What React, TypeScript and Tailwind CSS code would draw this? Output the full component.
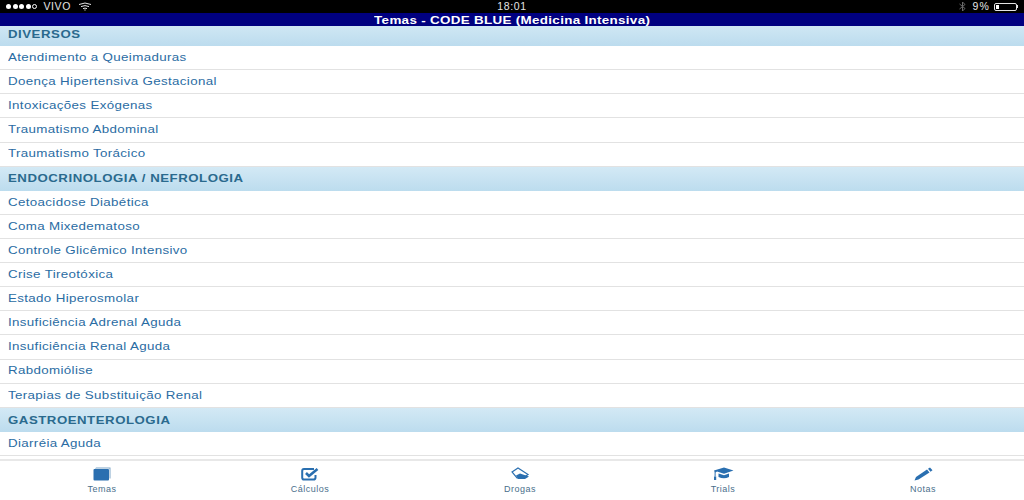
import React from 'react';

const sections = [
  {
    title: 'DIVERSOS',
    items: [
      'Atendimento a Queimaduras',
      'Doença Hipertensiva Gestacional',
      'Intoxicações Exógenas',
      'Traumatismo Abdominal',
      'Traumatismo Torácico',
    ],
  },
  {
    title: 'ENDOCRINOLOGIA / NEFROLOGIA',
    items: [
      'Cetoacidose Diabética',
      'Coma Mixedematoso',
      'Controle Glicêmico Intensivo',
      'Crise Tireotóxica',
      'Estado Hiperosmolar',
      'Insuficiência Adrenal Aguda',
      'Insuficiência Renal Aguda',
      'Rabdomiólise',
      'Terapias de Substituição Renal',
    ],
  },
  {
    title: 'GASTROENTEROLOGIA',
    // the next row is only a sliver above the tab bar, its text is not visible
    items: ['Diarréia Aguda', ''],
  },
];

const TemasIcon = () => (
  <svg width="18" height="14" viewBox="0 0 18 14" fill="#2a6fb0">
    <path d="M2 2 L3 0.5 H17.5 V11.5 H16.5 V1.5 H3.5 Z" fill="#7fa6c8" />
    <rect x="0.5" y="2" width="15.5" height="11.5" rx="1" />
  </svg>
);

const CalculosIcon = () => (
  <svg width="18" height="14" viewBox="0 0 18 14" fill="none" stroke="#2a6fb0">
    <path d="M13 2 H3 Q1.2 2 1.2 4 V10.5 Q1.2 12.6 3 12.6 H12.5 Q14.5 12.6 14.5 10.5 V8" strokeWidth="2" />
    <path d="M5 6 L8 9 L16.5 2" strokeWidth="2.6" />
  </svg>
);

const DrogasIcon = () => (
  <svg width="19" height="14" viewBox="0 0 19 14">
    <path d="M1 5 L7 1 L17 7.5 L12 11 H6 Z" fill="#ffffff" stroke="#2a6fb0" strokeWidth="1.2" />
    <path d="M5 8.5 L9 6.5 L18 9.5 L14 12 H7 Z" fill="#2a6fb0" />
  </svg>
);

const TrialsIcon = () => (
  <svg width="21" height="14" viewBox="0 0 21 14" fill="#2a6fb0">
    <path d="M11 0.5 L20.5 3.5 L11 6.8 L4 4.6 L2.6 5.4 V9.5 H1.6 V5 L1 3.6 Z" />
    <path d="M5.5 6.4 L11 8.2 L16 6.4 V10 Q11 12.5 5.5 10 Z" />
    <rect x="1" y="9.5" width="2.2" height="3.5" />
  </svg>
);

const NotasIcon = () => (
  <svg width="19" height="14" viewBox="0 0 19 14" fill="#2a6fb0">
    <path d="M0.5 13.5 L2 10 L13 2.5 L15.5 5.5 L4.5 12.5 Z" />
    <path d="M14 1.8 L16 0.5 L18.5 3.2 L16.5 4.8 Z" />
  </svg>
);

const tabs = [
  { label: 'Temas', icon: <TemasIcon />, cx: 'w-[204px]' },
  { label: 'Cálculos', icon: <CalculosIcon />, cx: 'w-[212px]' },
  { label: 'Drogas', icon: <DrogasIcon />, cx: 'w-[208px]' },
  { label: 'Trials', icon: <TrialsIcon />, cx: 'w-[198px]' },
  { label: 'Notas', icon: <NotasIcon />, cx: 'w-[202px]' },
];

export default function App() {
  return (
    <div className="w-[1024px] h-[500px] flex flex-col overflow-hidden bg-white font-['Liberation_Sans',sans-serif]">
      <div className="h-[13px] shrink-0 bg-black text-white text-[10.5px] leading-[13px] grid grid-cols-3 px-[6px]">
        <div className="flex items-center gap-[1.5px]">
          {[0, 1, 2, 3].map((i) => (
            <span key={i} className="w-[5px] h-[5px] rounded-full bg-white" />
          ))}
          <span className="w-[5px] h-[5px] rounded-full border border-white" />
          <span className="ml-[5px] tracking-[0.6px] text-[#e4e4e4]">VIVO</span>
          <svg className="ml-[5px]" width="14" height="9" viewBox="0 0 14 9" fill="none" stroke="#e4e4e4" strokeWidth="1">
            <path d="M1 2.5 Q7 -0.5 13 2.5" />
            <path d="M3 4.6 Q7 2.6 11 4.6" />
            <path d="M5 6.6 Q7 5.6 9 6.6" />
            <path d="M6.4 8 H7.6" />
          </svg>
        </div>
        <div className="text-center tracking-[0.6px] text-[#e4e4e4]">18:01</div>
        <div className="flex items-center justify-end">
          <svg width="7" height="11" viewBox="0 0 7 11" fill="none" stroke="#6a6a6a" strokeWidth="1">
            <path d="M0.5 3 L6 7.5 L3.5 10 V1 L6 3.5 L0.5 8" />
          </svg>
          <span className="ml-[6px] tracking-[1.2px] text-[#e4e4e4]">9%</span>
          <span className="ml-[4px] w-[23px] h-[8px] border border-[#e4e4e4] rounded-[2px] p-[1px]">
            <span className="block w-[3px] h-full bg-white" />
          </span>
          <span className="w-[1px] h-[3px] bg-[#e4e4e4]" />
        </div>
      </div>

      {/* the screenshot is stretched sideways, so the text is too */}
      <div className="h-[13px] shrink-0 bg-[#000080] text-white text-center text-[11px] leading-[13px] font-bold tracking-[0.25px]">
        <span className="inline-block origin-center scale-x-[1.22] pt-[1px]">Temas - CODE BLUE (Medicina Intensiva)</span>
      </div>

      <div className="flex-1 min-h-0 overflow-hidden">
        <div className="-mt-[4px]">
          {sections.map((section) => (
            <section key={section.title}>
              <div className="h-[24.11px] px-2 flex items-center bg-gradient-to-b from-[#d3e9f5] to-[#bcdcee] text-[#2a6a8e] text-[11px] font-bold tracking-[0.45px]">
                <span className="origin-left scale-x-[1.2]">{section.title}</span>
              </div>
              {section.items.map((item) => (
                <div
                  key={item}
                  className="h-[24.11px] px-2 flex items-center bg-white border-b border-[#e2e2e2] text-[#2a6ca3] text-[11.5px] tracking-[0.3px]"
                >
                  <span className="origin-left scale-x-[1.16]">{item}</span>
                </div>
              ))}
            </section>
          ))}
        </div>
      </div>

      <nav className="h-[41px] shrink-0 bg-white border-t-2 border-[#e8e8e8] flex">
        {tabs.map((tab) => (
          <div key={tab.label} className={`${tab.cx} flex flex-col items-center pt-[6px]`}>
            <div className="h-[14px] flex items-center">{tab.icon}</div>
            <span className="mt-[3px] text-[9px] leading-[10px] tracking-[0.5px] text-[#4a6f8c]">{tab.label}</span>
          </div>
        ))}
      </nav>
    </div>
  );
}
